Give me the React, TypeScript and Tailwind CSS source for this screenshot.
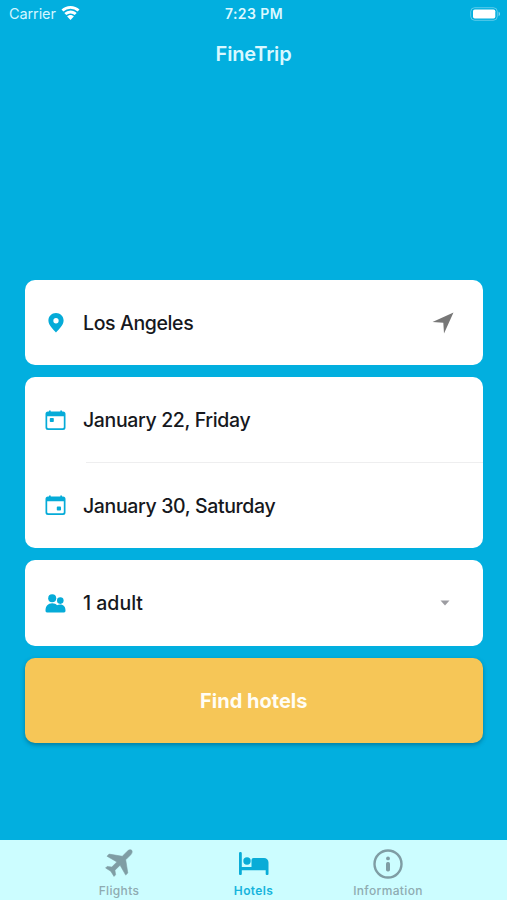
import type { ReactNode } from 'react';

function WifiIcon() {
  return (
    <svg className="h-[15px] w-[19px]" viewBox="0 0 19 15" fill="currentColor">
      <path d="M9.500.1C13 .1 16.200 1.400 18.500 3.600L16.600 5.600A10.300 10.300 0 0 0 2.400 5.600L.5 3.600A13 13 0 0 1 9.500.1Z" />
      <path d="M9.500 4.500C11.900 4.500 14.100 5.500 15.700 7.100L13.700 9.100A6 6 0 0 0 5.300 9.100L3.300 7.100A8.900 8.900 0 0 1 9.500 4.500Z" />
      <path d="M9.500 9.100C10.800 9.100 12 9.700 12.800 10.500L9.500 14L6.200 10.500C7 9.700 8.200 9.100 9.500 9.100Z" />
    </svg>
  );
}

function BatteryIcon() {
  return (
    <svg className="h-[14px] w-[31px]" viewBox="0 0 31 14">
      <rect x="0.700" y="0.700" width="26.600" height="12.600" rx="4" fill="none" stroke="#fff" strokeOpacity=".35" />
      <rect x="3" y="2.500" width="22.300" height="9" rx="1.800" fill="#fff" />
      <path d="M28.600 4.800C30.500 5.500 30.500 8.500 28.600 9.200Z" fill="#fff" opacity=".5" />
    </svg>
  );
}

function PinIcon() {
  return (
    <svg className="h-5 w-4" viewBox="0 0 16 20" fill="#05abd8">
      <path fillRule="evenodd" d="M8 0C3.700 0 .4 3.300.4 7.400C.4 12.100 5.200 16.300 8 19.500C10.800 16.300 15.600 12.100 15.600 7.400C15.600 3.300 12.300 0 8 0ZM8 5.100A2.650 2.650 0 1 1 8 10.400A2.650 2.650 0 0 1 8 5.100Z" />
    </svg>
  );
}

function CalendarIcon({ end = false }: { end?: boolean }) {
  return (
    <svg className="h-[21px] w-[21px]" viewBox="0 0 21 21" fill="#05abd8">
      <path fillRule="evenodd" d="M4 .4H5.700V1.500H15.300V.4H17V1.500H18A2.500 2.500 0 0 1 20.500 4V17.500A2.500 2.500 0 0 1 18 20H3A2.500 2.500 0 0 1 .5 17.500V4A2.500 2.500 0 0 1 3 1.500H4ZM2.200 6.300V17A1.300 1.300 0 0 0 3.500 18.300H17.500A1.300 1.300 0 0 0 18.800 17V6.300Z" />
      {end ? <rect x="11.800" y="11.600" width="4.200" height="4" rx=".8" /> : <rect x="4.800" y="8" width="4" height="4" rx=".8" />}
    </svg>
  );
}

function PeopleIcon() {
  return (
    <svg className="h-[19px] w-[21px]" viewBox="0 0 21 19" fill="#05abd8">
      <circle cx="7.200" cy="4.200" r="4" />
      <circle cx="15.300" cy="6.600" r="3.300" />
      <path d="M.5 16.500C.5 12.200 3 9.300 7.200 9.300C9.300 9.300 10.900 10 12 11.200C13 10.800 14 10.600 15.200 10.600C18.700 10.600 20.500 13.200 20.500 16.500C20.500 17.700 20 18.400 19 18.400H2C1 18.400.5 17.700.5 16.500Z" />
    </svg>
  );
}

function PlaneIcon() {
  return (
    <svg className="h-7 w-7" viewBox="0 0 28 28" fill="#7f9da4">
      <path d="M26.700 1.300C27.600 2.300 27.100 4.400 25.800 5.700L20.700 10.800L22.800 24L20.700 26.100L15.100 16.200L9.900 21.200L10.600 25.800L9 27.400L5.800 22.200L.6 19L2.200 17.400L6.800 18.100L11.900 12.900L2 7.200L4.100 5.100L17.300 7.300L22.300 2.200C23.600.9 25.700.4 26.700 1.300Z" stroke="#7f9da4" strokeWidth=".6" strokeLinejoin="round" />
    </svg>
  );
}

function BedIcon() {
  return (
    <svg className="h-6 w-[30px]" viewBox="0 0 30 24" fill="#09acd7">
      <path d="M0 1.200A1.200 1.200 0 0 1 1.200 0H1.600A1.200 1.200 0 0 1 2.800 1.200V15H12.500V8A2 2 0 0 1 14.500 6H25A4.500 4.500 0 0 1 29.500 10.500V22A1 1 0 0 1 28.500 23H27.700A1 1 0 0 1 26.700 22V18.200H2.800V22A1 1 0 0 1 1.800 23H1A1 1 0 0 1 0 22Z" />
      <circle cx="8" cy="9" r="3.700" />
    </svg>
  );
}

function InfoIcon() {
  return (
    <svg className="h-[30px] w-[30px]" viewBox="0 0 30 30" fill="#7f9da4">
      <circle cx="15" cy="15" r="13.500" fill="none" stroke="#7f9da4" strokeWidth="2.400" />
      <circle cx="15" cy="9.400" r="1.900" />
      <rect x="13" y="13" width="4" height="9.400" rx="1.700" />
    </svg>
  );
}

function Field({ icon, children, end }: { icon: ReactNode; children: ReactNode; end?: ReactNode }) {
  return (
    <div className="flex h-[85.500px] items-center pl-5 pt-px">
      <div className="flex w-[21px] justify-center">{icon}</div>
      <div className="ml-[17px] flex-1 whitespace-nowrap text-[19.500px] font-medium leading-6 text-[#16181d]">{children}</div>
      {end}
    </div>
  );
}

export default function App() {
  return (
    <div className="flex h-[900px] w-[507px] flex-col overflow-hidden bg-[#02afdf] font-['Inter','Liberation_Sans',sans-serif]">
      <header className="h-[279.500px] shrink-0 text-white">
        <div className="grid h-[27px] grid-cols-3 items-center pl-[9px] pr-[6px]">
          <div className="flex items-center gap-[5px] text-[#d3f6ff]">
            <span className="text-[14.500px] leading-5 tracking-[-.1px]">Carrier</span>
            <div className="text-white"><WifiIcon /></div>
          </div>
          <span className="-ml-[2px] text-center text-[14px] font-semibold leading-5 tracking-[.4px] text-[#dcf8ff]">7:23 PM</span>
          <div className="flex justify-end"><BatteryIcon /></div>
        </div>
        <h1 className="mt-[13px] text-center text-[20px] font-semibold leading-7 tracking-[-.2px] text-[#d9f8ff]">FineTrip</h1>
      </header>
      <main className="ml-[25px] mr-[24.500px] flex flex-1 flex-col gap-3">
        <section className="rounded-[10px] bg-white">
          <Field
            icon={<PinIcon />}
            end={<svg className="mr-[29px] h-[22px] w-[22px]" viewBox="0 0 22 22" fill="#777"><path d="M21.500.5L12 21.500L11.300 10.700L.5 10Z" /></svg>}
          ><span className="tracking-[-.38px]">Los Angeles</span></Field>
        </section>
        <section className="rounded-[10px] bg-white">
          <Field icon={<CalendarIcon />}><span className="tracking-[-.36px]">January 22, Friday</span></Field>
          <div className="-mt-px ml-[61px] h-px bg-[#eeeeef]" />
          <Field icon={<CalendarIcon end />}><span className="tracking-[-.36px]">January 30, Saturday</span></Field>
        </section>
        <section className="rounded-[10px] bg-white">
          <Field
            icon={<PeopleIcon />}
            end={<svg className="mr-[33px] h-[6px] w-[10px]" viewBox="0 0 10 6" fill="#9c9ca1"><path d="M.5 .5H9.500L5 5.500Z" /></svg>}
          >1 adult</Field>
        </section>
        <button className="h-[85.500px] rounded-[10px] bg-[#f6c657] pt-px text-[20px] font-bold leading-6 text-[#fffdf5] shadow-[0_2px_4px_rgba(0,50,70,.4)]">Find hotels</button>
      </main>
      <nav className="flex h-[60px] shrink-0 justify-center bg-[#ccfdff] text-[12px] font-medium leading-4 tracking-[.35px] text-[#8fabb1]">
        <div className="flex w-[134.500px] flex-col items-center">
          <div className="flex h-[43px] items-center pt-[3px]"><PlaneIcon /></div>
          <span>Flights</span>
        </div>
        <div className="flex w-[134.500px] flex-col items-center font-semibold text-[#16b4dc]">
          <div className="flex h-[43px] items-center pt-[4px]"><BedIcon /></div>
          <span>Hotels</span>
        </div>
        <div className="flex w-[134.500px] flex-col items-center">
          <div className="flex h-[43px] items-center pt-[4px]"><InfoIcon /></div>
          <span>Information</span>
        </div>
      </nav>
    </div>
  );
}
